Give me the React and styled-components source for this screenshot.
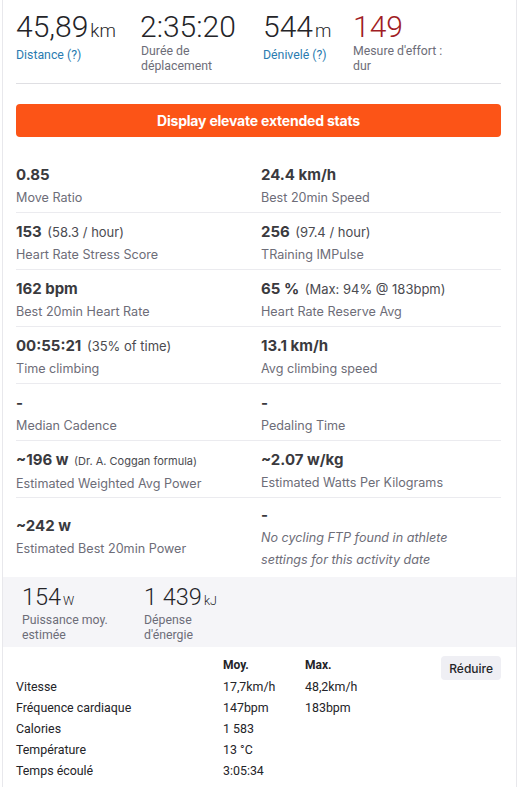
import React from "react";
import styled, { createGlobalStyle } from "styled-components";

const Global = createGlobalStyle`
  html, body { margin: 0; padding: 0; background: #fff; }
  body { font-family: Roboto, "Liberation Sans", sans-serif; color: #242428; }
`;

const Panel = styled.div`
  width: 515px;
  margin-left: 2px;
  border-left: 1px solid #e8e8ec;
  border-right: 1px solid #e8e8ec;
  min-height: 787px;
  box-sizing: border-box;
`;

const Inner = styled.div`
  padding: 0 15px 0 13px;
`;

const TopStats = styled.ul`
  list-style: none;
  margin: 0;
  padding: 10px 0 9px;
  display: flex;
  border-bottom: 1px solid #dfdfe3;
`;

const TopStat = styled.li`
  width: ${p => p.w}px;
  flex: none;
`;

const BigValue = styled.div`
  font-size: 30px;
  font-weight: 300;
  line-height: 34px;
  color: ${p => p.red ? "#a01c24" : "#242428"};
`;

const Unit = styled.abbr`
  font-size: 18.5px;
  margin-left: 2px;
  text-decoration: none;
`;

const TopLabel = styled.div`
  font-size: 12.3px;
  line-height: 15px;
  color: ${p => p.link ? "#2a7bb0" : "#6d6d78"};
  padding-left: ${p => p.indent || 0}px;
`;

const OrangeButton = styled.button`
  display: block;
  width: 100%;
  height: 33px;
  margin-top: 20px;
  border: none;
  border-radius: 4px;
  background: #fc5417;
  color: #fff;
  font-family: Inter, "Liberation Sans", sans-serif;
  font-weight: 700;
  font-size: 14px;
  letter-spacing: -0.2px;
`;

const Grid = styled.div`
  display: grid;
  grid-template-columns: 245px 1fr;
  margin-top: 19px;
  font-family: Inter, "Liberation Sans", sans-serif;
`;

const Cell = styled.div`
  height: ${p => p.tall ? 79 : 57}px;
  border-bottom: ${p => p.last ? "none" : "1px solid #ebebef"};
  box-sizing: border-box;
  display: flex;
  flex-direction: column;
  justify-content: ${p => p.tall ? "center" : "flex-start"};
  padding-top: ${p => p.tall ? 0 : 8}px;
`;

const Value = styled.div`
  font-size: 15px;
  font-weight: 700;
  line-height: 22px;
  color: #3a3a3e;
`;

const Extra = styled.span`
  font-size: ${p => p.small ? 11 : 13}px;
  font-weight: 400;
  color: #4b4b50;
  margin-left: 2px;
`;

const Label = styled.div`
  font-size: 12.6px;
  line-height: 22px;
  margin-top: 1px;
  color: #6d6d78;
  font-style: ${p => p.italic ? "italic" : "normal"};
`;

const GreyBand = styled.div`
  background: #f5f5f8;
  padding: 8px 0 9px 19px;
  display: flex;
  height: 70px;
  box-sizing: border-box;
`;

const SmallStat = styled.div`
  width: 122px;
`;

const MidValue = styled.div`
  font-size: 23.5px;
  font-weight: 300;
  line-height: 24px;
  color: #242428;
`;

const SmallUnit = styled.abbr`
  font-size: 12.5px;
  margin-left: 2px;
  text-decoration: none;
`;

const Footer = styled.div`
  display: flex;
  align-items: flex-start;
  padding: 10px 15px 0 13px;
`;

const Table = styled.div`
  flex: 1;
  font-size: 12.4px;
  font-family: Roboto, "Liberation Sans", sans-serif;
  color: #242428;
  display: grid;
  grid-template-columns: 207px 82px 1fr;
  grid-template-rows: 19px;
  grid-auto-rows: 21px;
  align-items: center;
`;

const Head = styled.div`
  font-weight: 700;
  font-size: 12px;
  align-self: start;
  line-height: 14px;
  padding-top: 1px;
`;

const Reduce = styled.button`
  background: #efeff4;
  border: none;
  border-radius: 4px;
  font-family: Inter, "Liberation Sans", sans-serif;
  font-weight: 500;
  font-size: 12px;
  color: #242428;
  padding: 0 8px;
  height: 24px;
  margin-top: -1px;
`;

const top = [
  { w: 124, v: "45,89", u: "km", l: "Distance (?)", link: true },
  { w: 123, v: "2:35:20", l: "Durée de\ndéplacement", indent: 1 },
  { w: 90, v: "544", u: "m", l: "Dénivelé (?)", link: true },
  { w: 140, v: "149", l: "Mesure d'effort :\ndur", red: true },
];

const stats = [
  ["0.85", null, "Move Ratio"],
  ["24.4 km/h", null, "Best 20min Speed"],
  ["153", "(58.3 / hour)", "Heart Rate Stress Score"],
  ["256", "(97.4 / hour)", "TRaining IMPulse"],
  ["162 bpm", null, "Best 20min Heart Rate"],
  ["65 %", "(Max: 94% @ 183bpm)", "Heart Rate Reserve Avg"],
  ["00:55:21", "(35% of time)", "Time climbing"],
  ["13.1 km/h", null, "Avg climbing speed"],
  ["-", null, "Median Cadence"],
  ["-", null, "Pedaling Time"],
  ["~196 w", "(Dr. A. Coggan formula)", "Estimated Weighted Avg Power", true],
  ["~2.07 w/kg", null, "Estimated Watts Per Kilograms"],
];

const rows = [
  ["Vitesse", "17,7km/h", "48,2km/h"],
  ["Fréquence cardiaque", "147bpm", "183bpm"],
  ["Calories", "1 583", ""],
  ["Température", "13 °C", ""],
  ["Temps écoulé", "3:05:34", ""],
];

export default function App() {
  return (
    <Panel>
      <Global />
      <Inner>
        <TopStats>
          {top.map(s => (
            <TopStat key={s.v} w={s.w}>
              <BigValue red={s.red}>
                {s.v}{s.u && <Unit>{s.u}</Unit>}
              </BigValue>
              <TopLabel link={s.link} indent={s.indent}>
                {s.l.split("\n").map((t, i) => <div key={i}>{t}</div>)}
              </TopLabel>
            </TopStat>
          ))}
        </TopStats>

        <OrangeButton>Display elevate extended stats</OrangeButton>

        <Grid>
          {stats.map(([v, extra, label, small], i) => (
            <Cell key={i}>
              <Value>
                {v}{extra && <> <Extra small={small}>{extra}</Extra></>}
              </Value>
              <Label>{label}</Label>
            </Cell>
          ))}
          <Cell tall last>
            <Value>~242 w</Value>
            <Label>Estimated Best 20min Power</Label>
          </Cell>
          <Cell tall last>
            <Value>-</Value>
            <Label italic>No cycling FTP found in athlete<br />settings for this activity date</Label>
          </Cell>
        </Grid>
      </Inner>

      <GreyBand>
        <SmallStat>
          <MidValue>154<SmallUnit>W</SmallUnit></MidValue>
          <TopLabel>Puissance moy.<br />estimée</TopLabel>
        </SmallStat>
        <SmallStat>
          <MidValue>1 439<SmallUnit>kJ</SmallUnit></MidValue>
          <TopLabel>Dépense<br />d'énergie</TopLabel>
        </SmallStat>
      </GreyBand>

      <Footer>
        <Table>
          <div />
          <Head>Moy.</Head>
          <Head>Max.</Head>
          {rows.map(r => (
            <React.Fragment key={r[0]}>
              <div>{r[0]}</div>
              <div>{r[1]}</div>
              <div>{r[2]}</div>
            </React.Fragment>
          ))}
        </Table>
        <Reduce>Réduire</Reduce>
      </Footer>
    </Panel>
  );
}
